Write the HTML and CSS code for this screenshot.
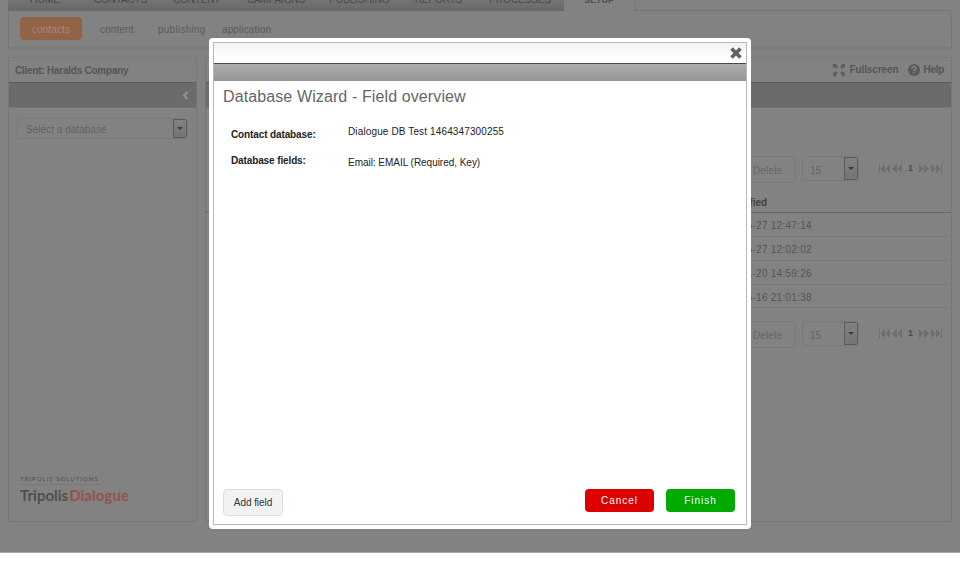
FILE: index.html
```html
<!DOCTYPE html>
<html lang="en">
<head>
<meta charset="utf-8">
<title>Tripolis Dialogue</title>
<link rel="stylesheet" href="styles.css">
</head>
<body>
<svg class="defs" width="0" height="0" aria-hidden="true">
  <symbol id="prev" viewBox="0 0 24 9"><path d="M0 0h1v9H0zM6 0v9L1.500 4.500zM11 0v9L6.500 4.500zM18 0v9L13 4.500zM23 0v9L18.500 4.500z"/></symbol>
</svg>
<div class="page">
  <nav class="tabs">
    <div class="tab-strip">
      <a class="w1">HOME</a><a class="w2">CONTACTS</a><a class="w3">CONTENT</a><a class="w4">CAMPAIGNS</a><a class="w5">PUBLISHING</a><a class="w6">REPORTS</a><a class="w7">PROCESSES</a>
    </div>
    <a class="active-tab">SETUP</a>
    <div class="tab-rest"></div>
  </nav>
  <div class="subnav">
    <a class="pill">contacts</a><a class="s-content">content</a><a class="s-pub">publishing</a><a class="s-app">application</a>
  </div>
  <div class="columns">
    <aside class="panel side">
      <div class="panel-head">Client: Haralds Company</div>
      <div class="bar"><svg width="7" height="9" viewBox="0 0 7 9"><path d="M5.500 1L2 4.500 5.500 8" fill="none" stroke="#929292" stroke-width="2"/></svg></div>
      <div class="select db"><span>Select a database</span><i></i></div>
      <div class="logo">
        <div class="logo-top">TRIPOLIS SOLUTIONS</div>
        <div class="logo-name">Tripolis<b>Dialogue</b></div>
      </div>
    </aside>
    <main class="panel content">
      <div class="panel-head tools">
        <svg width="12" height="12" viewBox="0 0 12 12" fill="#5e5e5e"><path d="M0 0h4L3 1l2 2-2 2-2-2-1 1zM12 0v4l-1-1-2 2-2-2 2-2-1-1zM0 12V8l1 1 2-2 2 2-2 2 1 1zM12 12H8l1-1-2-2 2-2 2 2 1-1z"/></svg>
        <span class="full">Fullscreen</span>
        <svg width="12" height="12" viewBox="0 0 12 12"><circle cx="6" cy="6" r="6" fill="#5a5a5a"/><path d="M4 4.500C4 2 8 2 8 4.300 8 5.700 6 5.500 6 7.200M6 8v1.500" fill="none" stroke="#858585" stroke-width="1.500"/></svg>
        <span class="help">Help</span>
      </div>
      <div class="bar"></div>
      <div class="actions">
        <span class="delete">Delete</span><div class="select count"><span>15</span><i></i></div>
        <div class="pager"><svg width="24" height="9"><use href="#prev"/></svg><b>1</b><svg class="flip" width="24" height="9"><use href="#prev"/></svg></div>
      </div>
      <div class="table">
        <div class="row th">Modified</div>
        <div class="row">2016-05-27 12:47:14</div>
        <div class="row">2016-05-27 12:02:02</div>
        <div class="row">2016-01-20 14:59:26</div>
        <div class="row">2015-06-16 21:01:38</div>
      </div>
      <div class="actions lower">
        <span class="delete">Delete</span><div class="select count"><span>15</span><i></i></div>
        <div class="pager"><svg width="24" height="9"><use href="#prev"/></svg><b>1</b><svg class="flip" width="24" height="9"><use href="#prev"/></svg></div>
      </div>
    </main>
  </div>
</div>
<section class="dialog">
  <div class="dialog-inner">
    <header class="dialog-head"><svg width="12" height="12" viewBox="0 0 12 12"><path d="M1.500 1.500l9 9M10.500 1.500l-9 9" stroke="#616161" stroke-width="3.700"/></svg></header>
    <div class="dialog-bar"></div>
    <div class="dialog-body">
      <h1>Database Wizard - Field overview</h1>
      <dl>
        <dt class="k1">Contact database:</dt><dd class="v1">Dialogue DB Test 1464347300255</dd>
        <dt class="k2">Database fields:</dt><dd class="v2">Email: EMAIL (Required, Key)</dd>
      </dl>
      <footer>
        <button class="add">Add field</button>
        <button class="cancel">Cancel</button>
        <button class="finish">Finish</button>
      </footer>
    </div>
  </div>
</section>
</body>
</html>
```
FILE: styles.css
```css
* { box-sizing: border-box; }
body { margin: 0; background: #fff; font: 10px/12px "Liberation Sans", sans-serif; height: 569px; overflow: hidden; }
.defs { display: block; }
.page { height: 553px; background: #828282; border-bottom: 1px solid #aaa; padding: 0 8px; overflow: hidden; color: #555; }
.tabs { display: flex; height: 11px; font-size: 10px; line-height: 12px; }
.tab-strip { display: flex; width: 556px; background: linear-gradient(#747474, #686868); color: #494949; }
.tab-strip a { margin-top: -6px; flex: none; letter-spacing: -.15px; }
.w1 { width: 64px; margin-left: 22px; }
.w2 { width: 79px; }
.w3 { width: 74px; }
.w4 { width: 82px; }
.w5 { width: 86px; }
.w6 { width: 74px; }
.w7 { width: 70px; }
.tab-strip .w1, .tab-strip .w7, .tab-strip .w5 { letter-spacing: 0; }
.active-tab { width: 71px; margin-top: -6px; padding-left: 20px; font-weight: bold; font-size: 9px; color: #505050; }
.tab-rest { flex: 1; border: 1px solid #767676; border-width: 0 0 1px 1px; }
.subnav { height: 38px; border: 1px solid #767676; border-top: 0; border-radius: 0 6px 0 0; display: flex; padding: 6px 0 0 11px; line-height: 25px; color: #5b5b5b; border-bottom: 2px solid #7b7b7b; }
.subnav a { flex: none; letter-spacing: .12px; }
.subnav .pill { width: 62px; height: 23px; background: #916447; color: #a78875; border-radius: 4px; text-align: center; }
.s-content { width: 58px; margin-left: 18px; }
.subnav .s-pub { width: 64px; letter-spacing: .25px; }
.columns { display: flex; gap: 8px; margin-top: 8px; height: 465px; }
.panel { border: 1px solid #767676; border-top-color: #7b7b7b; }
.side { width: 189px; display: flex; flex-direction: column; }
.content { flex: 1; }
.panel-head { height: 25px; line-height: 26px; padding-left: 6px; font-weight: bold; border-bottom: 1px solid #5b5b5b; letter-spacing: -.24px; flex: none; }
.bar { height: 25px; background: #6b6b6b; border-bottom: 1px solid #747474; display: flex; justify-content: flex-end; align-items: center; padding-right: 7px; flex: none; }
.tools { display: flex; align-items: center; justify-content: flex-end; padding-right: 7px; letter-spacing: -.1px; }
.full { margin: 0 9px 0 4px; }
.help { margin-left: 4px; letter-spacing: -.3px; }
.select { display: flex; border: 1px solid #797979; border-radius: 4px; color: #626262; overflow: hidden; }
.select span { flex: 1; }
.select i { width: 14px; border: 1px solid #5c5c5c; background: linear-gradient(#828282, #747474); display: flex; align-items: center; justify-content: center; }
.select i::after { content: ""; border: 3px solid transparent; border-top: 3px solid #3c3c3c; border-bottom: 0; }
.db { width: 171px; height: 21px; margin: 10px 0 0 8px; padding-left: 8px; line-height: 21px; letter-spacing: .03px; }
.logo { margin: auto 0 15px 11px; font-family: Lato, sans-serif; }
.logo-top { width: 80px; font-size: 6px; line-height: 10px; letter-spacing: 1.03px; white-space: nowrap; color: #4c4c4c; border-bottom: 1px solid #797979; }
.logo-name { font-size: 15px; line-height: 21px; font-weight: bold; color: #505050; white-space: nowrap; }
.logo-name b { color: #91574f; margin-left: 1px; }
.actions { display: flex; height: 27px; margin: 48px 8px 0 537px; }
.delete { width: 53px; height: 27px; border: 1px solid #7a7a7a; border-radius: 4px; padding-left: 9px; line-height: 27px; color: #666; letter-spacing: .1px; }
.count { width: 57px; height: 25px; margin-left: 6px; padding-left: 7px; line-height: 28px; letter-spacing: 0; }
.pager { display: flex; margin-left: 20px; height: 24px; align-items: center; color: #4a4a4a; }
.pager b { width: 15px; text-align: center; font-size: 9px; line-height: 10px; }
.flip { transform: scaleX(-1); }
#prev path { fill: #6e6e6e; }
.table { margin-top: 9px; }
.row { height: 24px; line-height: 25px; padding-left: 508px; border-bottom: 1px solid #7a7a7a; letter-spacing: .26px; }
.row:nth-child(n+3) { height: 23.800px; }
.th { height: 21px; line-height: 22px; border-color: #666; font-weight: bold; color: #414141; padding-left: 520px; letter-spacing: 0; }
.lower { margin-top: 13px; }
.dialog { position: absolute; left: 209px; top: 38px; width: 542px; height: 490.500px; padding: 4px; background: #fff; border-radius: 4px; }
.dialog-inner { height: 483px; border: 1px solid #b7b8bb; display: flex; flex-direction: column; }
.dialog-head { height: 21px; border-bottom: 1px solid #484848; background: linear-gradient(#f1f3f6, #fff 70%); display: flex; justify-content: flex-end; align-items: center; padding-right: 4px; }
.dialog-bar { height: 17px; background: linear-gradient(#adadad, #959595); }
.dialog-body { flex: 1; display: flex; flex-direction: column; padding: 6px 11px 8px 9px; }
h1 { margin: 0; font-size: 16px; line-height: 20px; font-weight: normal; color: #666; letter-spacing: .11px; }
dl { margin: 19px 0 0 8px; display: grid; grid-template-columns: 117px 1fr; color: #222; row-gap: 14px; }
dt { font-weight: bold; letter-spacing: -.12px; }
dd { margin: 0; letter-spacing: .13px; }
.k1 { padding-top: 3px; }
.v2 { padding-top: 2px; letter-spacing: -.03px; }
footer { margin-top: auto; display: flex; }
button { font: inherit; padding: 0; border-radius: 4px; }
.add { width: 60px; height: 27px; background: #f2f2f2; border: 1px solid #ddd; color: #333; margin-right: auto; letter-spacing: -.05px; }
.cancel, .finish { width: 69px; height: 23px; border: 0; color: #fff; letter-spacing: 1px; }
.cancel { background: #d00; margin-right: 12px; }
.finish { background: #0a0; }
```
